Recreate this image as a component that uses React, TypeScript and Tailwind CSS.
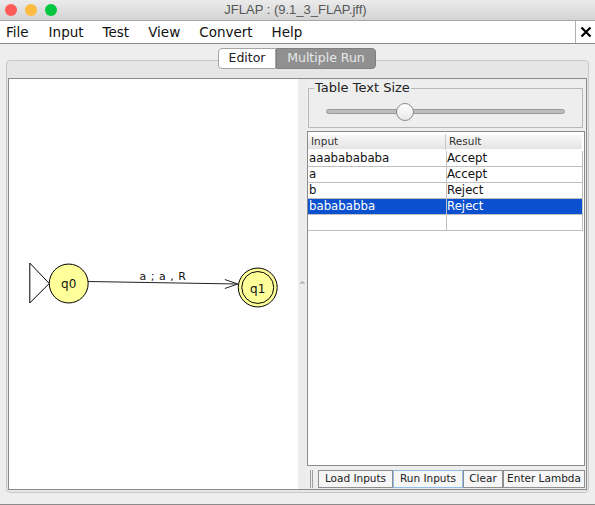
const ui = { fontFamily: '"DejaVu Sans", sans-serif' };

function Graph() {
  return (
    <svg className="h-full w-full" viewBox="0 0 289 411">
      <g transform="translate(-9 -78)" fill="none" stroke="#000" strokeWidth="1">
        <path d="M49 283 L29.5 262.5 L29.5 302.5 Z" fill="#fff" />
        <path d="M88 281 L238 283.5" stroke="#222" />
        <path d="M225 279 L238 283.5 L225 288" stroke="#222" />
        <circle cx="68.5" cy="283" r="19.5" fill="#ffff99" />
        <circle cx="258" cy="287" r="19.5" fill="#ffff99" />
        <circle cx="258" cy="287" r="16" />
        <g fill="#111" stroke="none" fontSize="12" style={ui}>
          <text x="68.5" y="288" textAnchor="middle">q0</text>
          <text x="258" y="293" textAnchor="middle">q1</text>
          <text x="163" y="279" textAnchor="middle" fontSize="11" letterSpacing="0.5">a ; a , R</text>
        </g>
      </g>
    </svg>
  );
}

const rows = ["aaababababa", "a", "b", "babababba", ""];
const results = ["Accept", "Accept", "Reject", "Reject", ""];

function ToolButton({ label, w, active }: { label: string; w: string; active?: boolean }) {
  return (
    <div
      className={`flex h-[18px] items-center justify-center border bg-[#f6f6f6] text-[10.5px] text-[#222] ${w} ${active ? "border-[#8fbde8]" : "border-[#8f8f8f]"}`}
    >
      {label}
    </div>
  );
}

export default function App() {
  return (
    <div className="flex h-[505px] w-[595px] flex-col overflow-hidden bg-[#eeeeee]" style={ui}>
      <header className="flex h-[21px] items-center border-b border-[#a8a8a8] bg-gradient-to-b from-[#ebebeb] to-[#d4d4d4]">
        <div className="flex w-[100px] gap-2 pl-[5px]">
          <span className="h-3 w-3 rounded-full bg-[#fc5b57]" />
          <span className="h-3 w-3 rounded-full bg-[#fdbb40]" />
          <span className="h-3 w-3 rounded-full bg-[#05c63f]" />
        </div>
        <div className="w-[395px] pr-[4px] text-center text-[13px] text-[#555]" style={{ fontFamily: '"Liberation Sans", sans-serif' }}>
          JFLAP : (9.1_3_FLAP.jff)
        </div>
      </header>
      <nav className="flex h-[23px] items-center border-b border-[#8c8c8c] bg-white text-[13.5px] text-[#111]">
        <div className="flex flex-1 gap-[19px] pl-[6px]">
          <span className="mr-[1px]">File</span>
          <span>Input</span>
          <span>Test</span>
          <span>View</span>
          <span>Convert</span>
          <span>Help</span>
        </div>
        <div className="flex h-[22px] w-[20px] items-center justify-center border-l border-[#b0b0b0]">
          <svg width="12" height="12" viewBox="0 0 12 12"><path d="M1.5 1.5 L10.5 10.5 M10.5 1.5 L1.5 10.5" stroke="#000" strokeWidth="2.2" /></svg>
        </div>
      </nav>
      <div className="flex flex-1 flex-col pt-[4px]">
        <div className="relative z-10 ml-[218px] flex h-[21px] w-[158px] text-[12.5px]">
          <div className="flex w-[58px] items-center justify-center rounded-l-[4px] border border-[#a5a5a5] bg-white text-[#222]">Editor</div>
          <div className="flex w-[100px] items-center justify-center rounded-r-[4px] border border-[#808080] bg-[#909090] text-[#e8e8e8]">Multiple Run</div>
        </div>
        <div className="-mt-[9px] ml-[6px] flex h-[433px] w-[583px] flex-col rounded-[4px] border border-[#c8c8c8] bg-[#e6e6e6] px-[1px] pt-[17px] pb-[3px]">
          <div className="flex h-[412px] border border-[#8a8a8a] bg-[#eeeeee]">
            <div className="w-[289px] shrink-0 bg-white"><Graph /></div>
            <div className="flex w-[8px] shrink-0 items-center justify-start bg-[#ececec] pl-[1px] pt-[4px] text-[8px] leading-none text-[#888]">^</div>
            <div className="flex flex-1 flex-col pl-[1px]">
              <fieldset className="mx-[1px] mt-[2px] h-[47px] w-[275px] border border-[#b8b8b8] px-[17px] pt-[14px]">
                <legend className="ml-[-12px] px-[1px] text-[13px] leading-[14px] text-[#222]">Table Text Size</legend>
                <div className="relative h-[5px] w-[239px] rounded-full border border-[#9a9a9a] bg-[#bdbdbd]">
                  <div className="absolute left-[69px] top-[-7px] h-[18px] w-[18px] rounded-full border border-[#8a8a8a] bg-gradient-to-b from-[#ffffff] to-[#e8e8e8]" />
                </div>
              </fieldset>
              <div className="mt-[3px] h-[335px] w-[278px] border border-[#8a8a8a] bg-white pt-[3px] text-[11.75px] text-[#111]">
                <div className="flex h-[14px] w-[274px] items-center bg-gradient-to-b from-[#f8f8f8] to-[#e4e4e4] text-[10.5px] text-[#333]">
                  <div className="w-[138px] border-r border-[#c8c8c8] pl-[3px]">Input</div>
                  <div className="pl-[3px]">Result</div>
                </div>
                <div className="mt-[2px] w-[275px] border-r border-[#c0c0c0]">
                  {rows.map((r, i) => (
                    <div key={i} className={`flex h-[16px] items-center border-b leading-none border-[#c0c0c0] ${i === 3 ? "bg-[#0b50ce] text-white" : ""}`}>
                      <div className="flex h-full w-[139px] items-center border-r border-[#c0c0c0] pl-[1px]">{r}</div>
                      <div>{results[i]}</div>
                    </div>
                  ))}
                </div>
              </div>
              <div className="flex items-center pt-[4px]">
                <div className="ml-[3px] mr-[5px] h-[18px] w-[3px] border-x border-[#a0a0a0]" />
                <ToolButton label="Load Inputs" w="w-[75px]" />
                <ToolButton label="Run Inputs" w="w-[70px]" active />
                <ToolButton label="Clear" w="w-[40px]" />
                <ToolButton label="Enter Lambda" w="w-[82px]" />
              </div>
            </div>
          </div>
        </div>
        <div className="mt-auto h-[1px] bg-[#8a8a8a]" />
      </div>
    </div>
  );
}
